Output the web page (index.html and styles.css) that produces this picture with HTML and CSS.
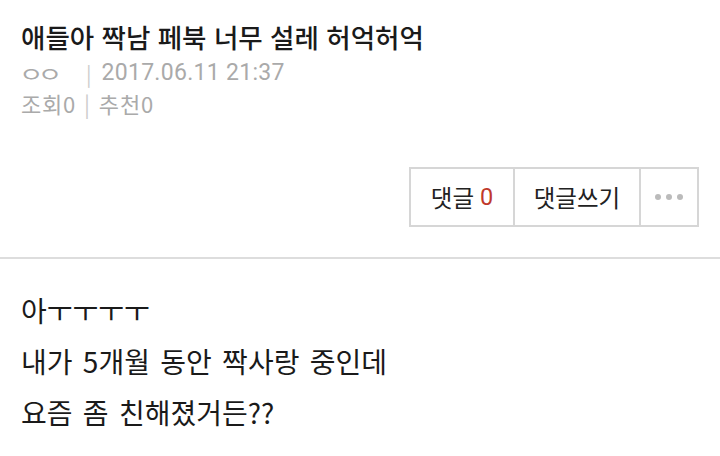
FILE: index.html
```html
<!DOCTYPE html>
<html lang="ko">
<head>
<meta charset="utf-8">
<link rel="stylesheet" href="styles.css">
</head>
<body>
<div class="page">
  <header class="head">
    <h1 class="title">애들아 짝남 페북 너무 설레 허억허억</h1>
    <div class="meta">
      <span class="author">ㅇㅇ</span>
      <span class="sep sep-wide">|</span>
      <span class="date">2017.06.11 21:37</span>
    </div>
    <div class="meta meta2">
      <span>조회0</span>
      <span class="sep">|</span>
      <span>추천0</span>
    </div>
  </header>
  <div class="actions">
    <div class="btns">
      <div class="btn btn-cmt">댓글 <span class="count">0</span></div>
      <div class="btn btn-write">댓글쓰기</div>
      <div class="btn btn-more"><span class="dot"></span><span class="dot"></span><span class="dot"></span></div>
    </div>
  </div>
  <div class="body">
    <p>아ㅜㅜㅜㅜ</p>
    <p>내가 5개월 동안 짝사랑 중인데</p>
    <p>요즘 좀 친해졌거든??</p>
  </div>
</div>
</body>
</html>
```
FILE: styles.css
```css
html, body {
  margin: 0;
  padding: 0;
  background: #fff;
}
body {
  font-family: "Noto Sans CJK KR", "Noto Sans", sans-serif;
  color: #222;
}
.page {
  width: 720px;
  height: 456px;
  overflow: hidden;
}
.head {
  padding: 16px 0 0 21px;
}
.title {
  margin: 0;
  font-size: 26.5px;
  font-weight: 500;
  line-height: 42px;
  color: #1a1a1a;
}
.meta {
  font-size: 20.5px;
  line-height: 30px;
  height: 30px;
  color: #aaa;
  display: flex;
  align-items: center;
}
.meta2 {
  font-size: 22px;
  letter-spacing: 0.8px;
  height: 31px;
  line-height: 31px;
  align-items: flex-end;
}
.author {
  display: inline-block;
  font-size: 20.5px;
  letter-spacing: -4.4px;
  transform: scaleX(1.3);
  transform-origin: left center;
  margin-left: -2px;
}
.date {
  font-family: Roboto, "Noto Sans CJK KR", sans-serif;
  font-size: 23px;
  letter-spacing: 0.3px;
}
.sep {
  color: #ccc;
  margin: 0 8px;
}
.sep-wide {
  margin: 0 10px 0 38px;
}
.actions {
  display: flex;
  justify-content: flex-end;
  padding: 48px 21px 30px 0;
  border-bottom: 2px solid #ddd;
}
.btns {
  display: flex;
  border: 2px solid #d6d6d6;
  height: 56px;
}
.btn {
  display: flex;
  align-items: center;
  justify-content: center;
  font-size: 23.5px;
  color: #222;
}
.btn-cmt { width: 102px; border-right: 2px solid #d6d6d6; }
.btn-write { width: 124px; border-right: 2px solid #d6d6d6; }
.btn-more { width: 56px; gap: 5px; }
.count {
  color: #c0392b;
  margin-left: 6px;
  font-family: Roboto, sans-serif;
}
.dot {
  width: 6px;
  height: 6px;
  border-radius: 50%;
  background: #bbb;
}
.body {
  padding: 26px 0 0 21px;
}
.body p {
  margin: 0;
  font-size: 28px;
  line-height: 51px;
  word-spacing: 2.5px;
  color: #1a1a1a;
}
```
